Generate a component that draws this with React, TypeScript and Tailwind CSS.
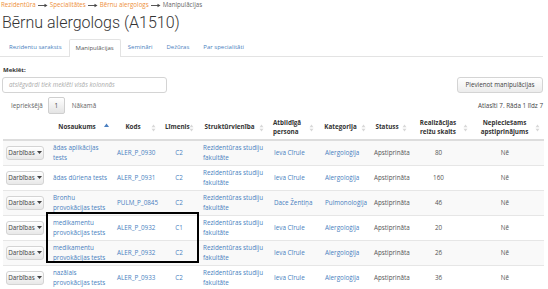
const rows = [
  { name: ["ādas aplikācijas", "tests"], code: "ALER_P_0930", level: "C2", person: "Ieva Cīrule", cat: "Alergoloģija", count: "80" },
  { name: ["ādas dūriena tests"], code: "ALER_P_0931", level: "C2", person: "Ieva Cīrule", cat: "Alergoloģija", count: "160" },
  { name: ["Bronhu", "provokācijas tests"], code: "PULM_P_0845", level: "C2", person: "Dace Žentiņa", cat: "Pulmonoloģija", count: "46" },
  { name: ["medikamentu", "provokācijas tests"], code: "ALER_P_0932", level: "C1", person: "Ieva Cīrule", cat: "Alergoloģija", count: "20" },
  { name: ["medikamentu", "provokācijas tests"], code: "ALER_P_0932", level: "C2", person: "Ieva Cīrule", cat: "Alergoloģija", count: "26" },
  { name: ["nazālais", "provokācijas tests"], code: "ALER_P_0933", level: "C2", person: "Ieva Cīrule", cat: "Alergoloģija", count: "36" },
];

const tabs = ["Rezidentu saraksts", "Manipulācijas", "Semināri", "Dežūras", "Par specialitāti"];

function Arrow() {
  return (
    <svg width="10" height="5" viewBox="0 0 10 5" className="mx-[2px]">
      <path d="M0 2.5 H8" stroke="#444" strokeWidth="0.9" />
      <path d="M6.5 0.8 L9.5 2.5 L6.5 4.2 Z" fill="#444" />
    </svg>
  );
}

function SortIcon({ active }: { active?: boolean }) {
  if (active) {
    return (
      <svg width="5" height="8" viewBox="0 0 5 8" className="absolute right-[4px] top-[7px]">
        <path d="M2.5 0.5 L5 4 L0 4 Z" fill="#4a7fc0" />
      </svg>
    );
  }
  return (
    <svg width="5" height="8" viewBox="0 0 5 8" className="absolute right-[4px] top-1/2 -translate-y-1/2">
      <path d="M2.5 0.5 L4.5 3.2 L0.5 3.2 Z" fill="#d8d8d8" />
      <path d="M2.5 7.5 L4.5 4.8 L0.5 4.8 Z" fill="#d8d8d8" />
    </svg>
  );
}

function Th({ children, active }: { children: React.ReactNode; active?: boolean }) {
  return (
    <th className="relative px-[5px] pr-[12px] align-middle text-center font-bold leading-[8.5px] text-[#333]">
      {children}
      <SortIcon active={active} />
    </th>
  );
}

export default function App() {
  const link = "text-[#4a7fc0]";
  return (
    <div className="relative w-[548px] h-[289px] overflow-hidden bg-white text-[6.3px] text-[#555] font-['Open_Sans',sans-serif]">
      <div className="px-[1px]">
        <div className="h-[10px] flex items-center leading-none text-[6.2px]">
          <span className="text-[#ee8f3a]">Rezidentūra</span>
          <Arrow />
          <span className="text-[#ee8f3a]">Specialitātes</span>
          <Arrow />
          <span className="text-[#ee8f3a]">Bērnu alergologs</span>
          <Arrow />
          <span className="text-[#666]">Manipulācijas</span>
        </div>
        <h1 className="mt-[1px] ml-[1px] h-[24px] leading-[24px] text-[16px] font-light text-[#333] font-['Roboto',sans-serif]">
          Bērnu alergologs (A1510)
        </h1>
      </div>

      <div className="mt-[4px] mr-[5px] flex h-[18px] border-b border-[#e3e3e3] pl-[2px] text-[6px]">
        {tabs.map((t, i) =>
          i === 1 ? (
            <div key={t} className="-mb-px flex items-center rounded-t-[2px] border border-b-0 border-[#e3e3e3] bg-white px-[6px] text-[#555]">
              {t}
            </div>
          ) : (
            <div key={t} className={`flex items-center px-[7px] ${link}`}>
              {t}
            </div>
          )
        )}
      </div>

      <div className="px-[3px]">
        <div className="mt-[9px] text-[6px] font-bold leading-[8px] text-[#333]">Meklēt:</div>
        <div className="mt-[3px] flex items-center justify-between">
          <div className="ml-[-1px] flex h-[16px] w-[165px] items-center rounded-[3px] border border-[#d4d4d4] px-[6px] italic text-[#aaa]">
            atslēgvārdi tiek meklēti visās kolonnās
          </div>
          <div className="mr-[2px] flex h-[16px] w-[86px] items-center justify-center rounded-[3px] border border-[#d4d4d4] bg-gradient-to-b from-white to-[#ececec] text-[#444]">
            Pievienot manipulācijas
          </div>
        </div>
        <div className="mt-[4px] flex h-[17px] items-center justify-between">
          <div className="flex items-center">
            <span className="ml-[8px] text-[#666]">Iepriekšējā</span>
            <span className="ml-[5px] flex h-[17px] w-[17px] items-center justify-center rounded-[2px] border border-[#cfcfcf] bg-gradient-to-b from-white to-[#e4e4e4] text-[#444]">
              1
            </span>
            <span className="ml-[7px] text-[#666]">Nākamā</span>
          </div>
          <span className="mr-[2px] text-[#444]">Atlasīti 7. Rāda 1 līdz 7</span>
        </div>

        <table className="mt-[2px] w-[541px] table-fixed border-collapse">
          <colgroup>
            <col className="w-[45px]" />
            <col className="w-[65px]" />
            <col className="w-[47px]" />
            <col className="w-[38px]" />
            <col className="w-[70px]" />
            <col className="w-[50px]" />
            <col className="w-[52px]" />
            <col className="w-[41px]" />
            <col className="w-[61px]" />
            <col className="w-[72px]" />
          </colgroup>
          <thead>
            <tr className="h-[24px] border-b-2 border-[#ddd]">
              <th />
              <Th active>Nosaukums</Th>
              <Th>Kods</Th>
              <Th>Līmenis</Th>
              <Th>Struktūrvienība</Th>
              <Th>
                <span className="block text-left">Atbildīgā</span>
                <span className="block text-left">persona</span>
              </Th>
              <Th>Kategorija</Th>
              <Th>Statuss</Th>
              <Th>
                Realizācijas
                <br />
                reižu skaits
              </Th>
              <Th>
                Nepieciešams
                <br />
                apstiprinājums
              </Th>
            </tr>
          </thead>
          <tbody>
            {rows.map((r, i) => (
              <tr key={i} className={`h-[25px] border-t border-[#e6e6e6] leading-[9.5px] ${i % 2 === 0 ? "bg-[#f9f9f9]" : "bg-white"}`}>
                <td className="pl-[3px] align-middle">
                  <span className="flex h-[14px] w-[38px] items-center justify-center gap-[2px] rounded-[3px] border border-[#d4d4d4] bg-gradient-to-b from-white to-[#e8e8e8] text-[#444]">
                    Darbības
                    <svg width="5" height="3" viewBox="0 0 5 3">
                      <path d="M0 0 L5 0 L2.5 3 Z" fill="#444" />
                    </svg>
                  </span>
                </td>
                <td className={`px-[5px] align-middle ${link}`}>
                  {r.name.map((n) => (
                    <span key={n} className="block whitespace-nowrap">{n}</span>
                  ))}
                </td>
                <td className={`px-[4px] align-middle ${link}`}>{r.code}</td>
                <td className={`text-center align-middle ${link}`}>{r.level}</td>
                <td className={`px-[5px] align-middle ${link}`}>
                  <span className="block whitespace-nowrap">Rezidentūras studiju</span>
                  <span className="block">fakultāte</span>
                </td>
                <td className={`pl-[6px] align-middle whitespace-nowrap ${link}`}>{r.person}</td>
                <td className={`pl-[7px] align-middle whitespace-nowrap ${link}`}>{r.cat}</td>
                <td className="pl-[4px] align-middle whitespace-nowrap">Apstiprināta</td>
                <td className="pr-[6px] text-center align-middle">{r.count}</td>
                <td className="pr-[6px] text-center align-middle">Nē</td>
              </tr>
            ))}
          </tbody>
        </table>
      </div>

      <div className="absolute left-[46px] top-[212px] h-[51px] w-[153px] border-2 border-black" />
    </div>
  );
}
